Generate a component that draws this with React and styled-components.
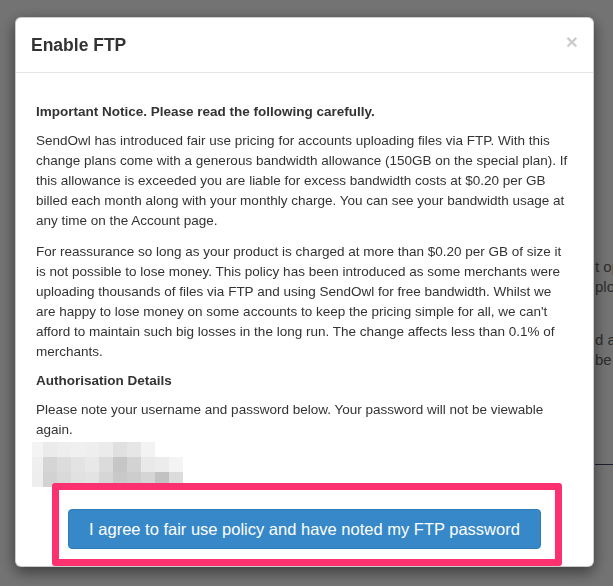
import React from "react";
import styled, { createGlobalStyle } from "styled-components";

const GlobalStyle = createGlobalStyle`
  html, body {
    margin: 0;
    padding: 0;
    background: #fff;
  }
  body {
    font-family: "Liberation Sans", Arial, sans-serif;
    color: #333;
    overflow: hidden;
  }
`;

const Page = styled.div`
  min-height: 586px;
  padding-top: 257px;
  box-sizing: border-box;
`;

const PageColumn = styled.div`
  margin-left: 595px;
  font-size: 15px;
  line-height: 20px;
  color: #666;
  white-space: nowrap;
`;

const PageText = styled.p`
  margin: 0 0 33px;
`;

const PageRule = styled.hr`
  margin: 94px 0 0;
  border: 0;
  border-top: 1px solid #3c4466;
`;

const Backdrop = styled.div`
  position: fixed;
  inset: 0;
  background: rgba(0, 0, 0, 0.55);
`;

const ModalLayer = styled.div`
  position: fixed;
  inset: 0;
  overflow: hidden;
`;

const Dialog = styled.div`
  width: 579px;
  margin: 17px 0 0 15px;
  box-sizing: border-box;
  background: #fff;
  border: 1px solid rgba(0, 0, 0, 0.2);
  border-radius: 6px;
  box-shadow: 0 5px 15px rgba(0, 0, 0, 0.5);
`;

const Header = styled.div`
  display: flex;
  justify-content: space-between;
  align-items: flex-start;
  padding: 15px;
  border-bottom: 1px solid #e5e5e5;
`;

const Title = styled.h4`
  margin: 0;
  font-size: 17.5px;
  line-height: 24px;
  font-weight: bold;
  color: #333;
`;

const Close = styled.button`
  margin-top: -2px;
  padding: 0;
  border: 0;
  background: transparent;
  font-family: "Liberation Sans", Arial, sans-serif;
  font-size: 21px;
  font-weight: bold;
  line-height: 1;
  color: #000;
  opacity: 0.2;
  cursor: pointer;
`;

const Body = styled.div`
  padding: 20px 20px 0;
  font-size: 13.5px;
  line-height: 20px;
`;

const Heading = styled.h5`
  margin: 11px 0;
  font-size: 13.5px;
  line-height: 16px;
  font-weight: bold;
  color: #333;
`;

const Paragraph = styled.p`
  margin: 0 0 ${(p) => p.$gap ?? 11}px;
  white-space: nowrap;
`;

const Mosaic = styled.svg`
  display: block;
  margin-left: -4px;
`;

const Footer = styled.div`
  position: relative;
  padding: 22px 15px 17px;
  text-align: center;
`;

const PrimaryButton = styled.button`
  padding: 9px 20px;
  font-family: "Liberation Sans", Arial, sans-serif;
  font-size: 16.5px;
  line-height: 20px;
  color: #fff;
  background: #3688c8;
  border: 1px solid #2f7cb8;
  border-radius: 4px;
  cursor: pointer;
`;

const Highlight = styled.div`
  position: absolute;
  top: -4px;
  left: 36px;
  width: 510px;
  height: 83px;
  box-sizing: border-box;
  border: 7px solid #fd3070;
  border-radius: 3px;
  pointer-events: none;
`;

const Lines = ({ lines }) =>
  lines.map((line, i) => (
    <React.Fragment key={i}>
      {line}
      {i < lines.length - 1 && <br />}
    </React.Fragment>
  ));

const p1 = [
  "SendOwl has introduced fair use pricing for accounts uploading files via FTP. With this",
  "change plans come with a generous bandwidth allowance (150GB on the special plan). If",
  "this allowance is exceeded you are liable for excess bandwidth costs at $0.20 per GB",
  "billed each month along with your monthly charge. You can see your bandwidth usage at",
  "any time on the Account page.",
];

const p2 = [
  "For reassurance so long as your product is charged at more than $0.20 per GB of size it",
  "is not possible to lose money. This policy has been introduced as some merchants were",
  "uploading thousands of files via FTP and using SendOwl for free bandwidth. Whilst we",
  "are happy to lose money on some accounts to keep the pricing simple for all, we can't",
  "afford to maintain such big losses in the long run. The change affects less than 0.1% of",
  "merchants.",
];

const p3 = [
  "Please note your username and password below. Your password will not be viewable",
  "again.",
];

// blurred-out credentials
const mosaicRows = [
  ["#f4f4f4", "#ebebeb", "#eeeeee", "#f0f0f0", "#eeeeee", "#ebebeb", "#e0e0e0", "#e6e6e6", "#f3f3f3", "#ffffff", "#ffffff"],
  ["#efefef", "#d5d5d5", "#dcdcdc", "#e3e3e3", "#e8e8e8", "#dbdbdb", "#c6c6c6", "#d3d3d3", "#e9e9e9", "#ececec", "#f4f4f4"],
  ["#eeeeee", "#d2d2d2", "#d9d9d9", "#e1e1e1", "#e3e3e3", "#d6d6d6", "#c9c9c9", "#cdcdcd", "#d5d5d5", "#c2c2c2", "#dcdcdc"],
];

const Redacted = () => (
  <Mosaic width="170" height="45" viewBox="0 0 170 45">
    {mosaicRows.map((row, r) =>
      row.map((c, i) => (
        <rect
          key={`${r}-${i}`}
          x={i === 0 ? 0 : 11 + (i - 1) * 14}
          y={r * 15}
          width={i === 0 ? 11 : 14}
          height="15"
          fill={c}
        />
      ))
    )}
    <rect x="0" y="45" width="11" height="5" fill="#eeeeee" />
  </Mosaic>
);

const App = () => {
  return (
    <>
      <GlobalStyle />
      <Page>
        <PageColumn>
          <PageText>
            t options
            <br />
            ploads
          </PageText>
          <PageText>
            d and
            <br />
            be
          </PageText>
          <PageRule />
        </PageColumn>
      </Page>
      <Backdrop />
      <ModalLayer>
        <Dialog>
          <Header>
            <Title>Enable FTP</Title>
            <Close type="button" aria-label="Close">
              ×
            </Close>
          </Header>
          <Body>
            <Heading>Important Notice. Please read the following carefully.</Heading>
            <Paragraph>
              <Lines lines={p1} />
            </Paragraph>
            <Paragraph>
              <Lines lines={p2} />
            </Paragraph>
            <Heading>Authorisation Details</Heading>
            <Paragraph $gap={2}>
              <Lines lines={p3} />
            </Paragraph>
            <Redacted />
          </Body>
          <Footer>
            <PrimaryButton type="button">
              I agree to fair use policy and have noted my FTP password
            </PrimaryButton>
            <Highlight />
          </Footer>
        </Dialog>
      </ModalLayer>
    </>
  );
};

export default App;
